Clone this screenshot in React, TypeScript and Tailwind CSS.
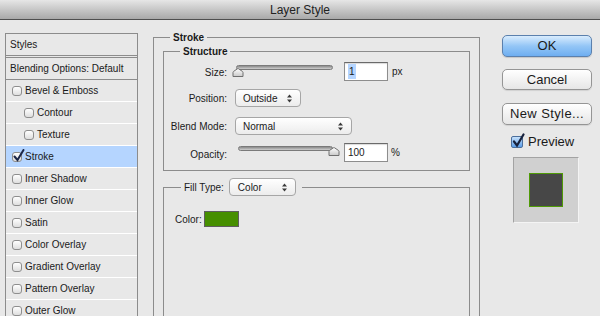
import React from "react";

function Box({ checked }: { checked?: boolean }) {
  return (
    <span className="relative inline-block w-[10px] h-[10px] rounded-[3px] border border-[#8e8e8e] bg-gradient-to-b from-white to-[#dedede] shrink-0">
      {checked && (
        <svg className="absolute left-[0px] top-[-4px]" width="12" height="13" viewBox="0 0 12 13">
          <path d="M1.5 7.5 L4.5 11 L10.5 1" stroke="#1c2748" strokeWidth="2" fill="none" strokeLinecap="round" />
        </svg>
      )}
    </span>
  );
}

function Row({ label, level, checked, selected }: { label: string; level: number; checked?: boolean; selected?: boolean }) {
  return (
    <div
      className={`h-[22px] border-b border-white flex items-center ${level === 2 ? "pl-[18px]" : "pl-[6px]"} ${selected ? "bg-[#b5d5ff]" : ""}`}
    >
      <Box checked={checked} />
      <span className="ml-[3px]">{label}</span>
    </div>
  );
}

function Arrows() {
  return (
    <svg width="5" height="9" viewBox="0 0 5 9">
      <path d="M0 3.5 L2.5 0.5 L5 3.5 Z M0 5.5 L2.5 8.5 L5 5.5 Z" fill="#3a3a3a" />
    </svg>
  );
}

function Thumb() {
  return (
    <svg width="12" height="9" viewBox="0 0 12 9">
      <defs>
        <linearGradient id="tg" x1="0" y1="0" x2="0" y2="1">
          <stop offset="0" stopColor="#ffffff" />
          <stop offset="1" stopColor="#c9c9c9" />
        </linearGradient>
      </defs>
      <path d="M1 8.5 L1 4.5 Q1 3.8 1.6 3.4 L5.4 0.8 Q6 0.4 6.6 0.8 L10.4 3.4 Q11 3.8 11 4.5 L11 8.5 Z" fill="url(#tg)" stroke="#6f6f6f" strokeWidth="1" />
    </svg>
  );
}

function Input({ children }: { children: React.ReactNode }) {
  return (
    <div className="w-[44px] h-[19px] bg-white border border-[#8d8d8d] border-t-[#6a6a6a] shadow-[inset_0_1px_1px_rgba(0,0,0,0.15)] flex items-center pl-[3px] text-[10px]">
      {children}
    </div>
  );
}

export default function App() {
  const rows: { label: string; level: number; checked?: boolean; selected?: boolean }[] = [
    { label: "Bevel & Emboss", level: 1 },
    { label: "Contour", level: 2 },
    { label: "Texture", level: 2 },
    { label: "Stroke", level: 1, checked: true, selected: true },
    { label: "Inner Shadow", level: 1 },
    { label: "Inner Glow", level: 1 },
    { label: "Satin", level: 1 },
    { label: "Color Overlay", level: 1 },
    { label: "Gradient Overlay", level: 1 },
    { label: "Pattern Overlay", level: 1 },
    { label: "Outer Glow", level: 1 },
  ];

  return (
    <div className="w-[600px] h-[316px] overflow-hidden bg-[#e8e8e8] flex flex-col text-[#1a1a1a] font-['Liberation_Sans',Arial,sans-serif]">
      <div className="h-[20px] shrink-0 border-b border-[#4f4f4f] bg-gradient-to-b from-[#e6e6e6] to-[#a9a9a9] flex items-center justify-center text-[12px] text-[#222]">
        Layer Style
      </div>

      <div className="flex items-start">
        {/* Left styles list */}
        <div className="ml-[5px] mt-[13px] w-[133px] border border-[#8c8c8c] text-[10px] shrink-0">
          <div className="h-[22px] border-b border-[#8c8c8c] flex items-center pl-[4px]">Styles</div>
          <div className="h-[23px] mt-[1px] border-t border-b border-[#8c8c8c] flex items-center pl-[4px]">
            Blending Options: Default
          </div>
          {rows.map((r) => (
            <Row key={r.label} {...r} />
          ))}
        </div>

        {/* Middle */}
        <fieldset className="ml-[15px] mt-[11px] w-[327px] h-[320px] border border-[#8c8c8c] pl-[9px] pr-[9px] shrink-0">
          <legend className="ml-[7px] px-[3px] text-[10px] leading-[13px] font-bold">Stroke</legend>

          <fieldset className="mt-[1px] border border-[#8c8c8c] pb-[8px] text-[10px]">
            <legend className="ml-[16px] px-[3px] leading-[13px] font-bold">Structure</legend>

            <div className="mt-[4px] flex items-center h-[19px]">
              <div className="w-[63px] text-right pt-[2px]">Size:</div>
              <div className="ml-[5px] relative w-[101px] h-[19px]">
                <div className="absolute left-[4px] right-0 top-[3px] h-[5px] rounded-full border border-[#7a7a7a] bg-gradient-to-b from-[#8a8a8a] to-[#cfcfcf]" />
                <div className="absolute left-0 top-[6px] leading-none">
                  <Thumb />
                </div>
              </div>
              <div className="ml-[11px]">
                <Input>
                  <span className="bg-[#b5d5ff] px-[1px]">1</span>
                </Input>
              </div>
              <span className="ml-[4px]">px</span>
            </div>

            <div className="mt-[8px] flex items-center h-[18px]">
              <div className="w-[63px] text-right">Position:</div>
              <div className="ml-[8px] w-[66px] h-[18px] rounded-[4px] border border-[#a6a6a6] bg-gradient-to-b from-white to-[#ececec] flex items-center justify-between pl-[7px] pr-[8px]">
                <span>Outside</span>
                <Arrows />
              </div>
            </div>

            <div className="mt-[10px] flex items-center h-[18px]">
              <div className="w-[63px] text-right">Blend Mode:</div>
              <div className="ml-[8px] w-[117px] h-[18px] rounded-[4px] border border-[#a6a6a6] bg-gradient-to-b from-white to-[#ececec] flex items-center justify-between pl-[7px] pr-[8px]">
                <span>Normal</span>
                <Arrows />
              </div>
            </div>

            <div className="mt-[8px] flex items-center h-[19px]">
              <div className="w-[63px] text-right pt-[4px]">Opacity:</div>
              <div className="ml-[5px] relative w-[101px] h-[19px]">
                <div className="absolute left-[6px] right-0 top-[3px] h-[5px] rounded-full border border-[#7a7a7a] bg-gradient-to-b from-[#8a8a8a] to-[#cfcfcf]" />
                <div className="absolute left-[96px] top-[4px] leading-none">
                  <Thumb />
                </div>
              </div>
              <div className="ml-[11px]">
                <Input>100</Input>
              </div>
              <span className="ml-[3px]">%</span>
            </div>
          </fieldset>

          <fieldset className="mt-[7px] h-[200px] border border-[#8c8c8c] text-[10px]">
            <legend className="ml-[17px] px-0">
              <div className="inline-flex items-center h-[18px] pl-[3px] pr-[6px]">
                <span>Fill Type:</span>
                <div className="ml-[5px] w-[67px] h-[18px] rounded-[4px] border border-[#a6a6a6] bg-gradient-to-b from-white to-[#ececec] flex items-center justify-between pl-[8px] pr-[8px]">
                  <span>Color</span>
                  <Arrows />
                </div>
              </div>
            </legend>
            <div className="mt-[15px] pl-[11px] flex items-center">
              <span>Color:</span>
              <div className="ml-[2px] w-[35px] h-[16px] bg-[#468f00] border border-[#5e5e5e]" />
            </div>
          </fieldset>
        </fieldset>

        {/* Right buttons */}
        <div className="ml-[22px] mt-[15px] w-[90px] flex flex-col text-[13px] shrink-0">
          <div className="h-[22px] rounded-[5px] border border-[#5b80ad] bg-gradient-to-b from-[#d9ecfd] via-[#94c6f6] to-[#6eaef1] flex items-center justify-center shadow-[0_1px_1px_rgba(0,0,0,0.15)]">
            OK
          </div>
          <div className="mt-[12px] h-[21px] rounded-[5px] border border-[#959595] bg-gradient-to-b from-white to-[#e6e6e6] flex items-center justify-center shadow-[0_1px_1px_rgba(0,0,0,0.1)]">
            Cancel
          </div>
          <div className="mt-[13px] h-[22px] rounded-[5px] border border-[#959595] bg-gradient-to-b from-white to-[#e6e6e6] flex items-center justify-center tracking-[0.4px] shadow-[0_1px_1px_rgba(0,0,0,0.1)]">
            New Style...
          </div>
          <div className="mt-[10px] ml-[9px] flex items-center h-[13px]">
            <span className="relative inline-block w-[12px] h-[12px] rounded-[2px] border border-[#4c6f9c] bg-gradient-to-b from-[#c6e1fb] to-[#5c9ee8] shrink-0">
              <svg className="absolute left-[0px] top-[-4px]" width="13" height="15" viewBox="0 0 13 15">
                <path d="M2 8.5 L5 12.5 L11.5 1.5" stroke="#18223d" strokeWidth="2.2" fill="none" strokeLinecap="round" />
              </svg>
            </span>
            <span className="ml-[5px]">Preview</span>
          </div>
          <div className="mt-[9px] ml-[11px] w-[66px] h-[66px] bg-[#d0d0d0] border border-[#a3a3a3] border-r-[#f4f4f4] border-b-[#f4f4f4] flex items-center justify-center">
            <div className="w-[34px] h-[34px] bg-[#474747] border border-[#4f9a06]" />
          </div>
        </div>
      </div>
    </div>
  );
}
